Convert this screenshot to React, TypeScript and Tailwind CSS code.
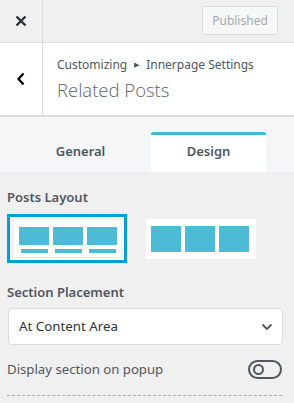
import React from "react";

export default function App() {
  const font = { fontFamily: '"Noto Sans", "Open Sans", sans-serif' };
  return (
    <div className="w-[294px] h-[403px] bg-[#f0f0f1] overflow-hidden text-[#50575e]" style={font}>
      {/* top bar */}
      <div className="h-[43px] flex border-b border-[#dcdcde] bg-[#f0f0f1]">
        <div className="w-[43px] border-r border-[#dcdcde] flex items-center justify-center">
          <svg width="12" height="12" viewBox="0 0 12 12">
            <path d="M1.5 1.5 L10.5 10.5 M10.5 1.5 L1.5 10.5" stroke="#2c3338" strokeWidth="2.4" strokeLinecap="butt" />
          </svg>
        </div>
        <div className="flex-1 flex justify-end items-start pt-[6px] pr-[16px]">
          <div className="w-[76px] h-[29px] rounded-[3px] border border-[#dcdcde] bg-[#f6f7f7] text-[#a7aaad] text-[12px] flex items-center justify-center">
            Published
          </div>
        </div>
      </div>
      {/* header */}
      <div className="h-[74px] flex bg-white border-b-2 border-[#dcdcde]">
        <div className="w-[43px] border-r border-[#dcdcde] flex items-center justify-center">
          <svg width="10" height="14" viewBox="0 0 10 14">
            <path d="M7.5 1.5 L2.5 7 L7.5 12.5" stroke="#000" strokeWidth="2.2" fill="none" />
          </svg>
        </div>
        <div className="flex-1 pl-[14px] pt-[13px]">
          <div className="text-[12px] leading-[18px] text-[#50575e] flex items-center">
            Customizing
            <span className="text-[7px] mx-[7px] text-[#50575e]">▶</span>
            Innerpage Settings
          </div>
          <div
            className="text-[18.5px] leading-[26px] font-light text-[#5f666d] mt-[3px]"
            style={{ fontFamily: '"Open Sans", "Noto Sans", sans-serif' }}
          >
            Related Posts
          </div>
        </div>
      </div>
      {/* tabs */}
      <div className="h-[55px] bg-[#f5f6f8] flex items-end pt-[15px]">
        <div className="w-[151px] h-[40px] flex items-center justify-center text-[13px] font-semibold text-[#50575e] pl-[10px]">
          General
        </div>
        <div className="w-[115px] h-[40px] bg-white rounded-t-[2px] border-t-[3px] border-[#46b7d3] flex items-center justify-center text-[13px] font-semibold text-[#50575e] pb-[3px]">
          Design
        </div>
      </div>
      {/* content */}
      <div className="bg-[#f0f0f0] px-[7px]">
        <div className="pt-[15px] text-[13px] leading-[20px] font-semibold text-[#50575e]">Posts Layout</div>
        <div className="flex items-center mt-[7px] gap-[19px]">
          <div className="w-[120px] h-[49px] border-[3px] border-[#00a0d2] bg-white p-[2px]">
            <div className="w-full h-full bg-white border border-[#eeeeee] pt-[7px] pl-[6px] flex gap-[4px]">
              {[0, 1, 2].map((i) => (
                <div key={i} className="flex flex-col items-center w-[30px]">
                  <div className="w-[30px] h-[18px] bg-[#4dbbd5]" />
                  <div className="w-[27px] h-[4px] bg-[#4dbbd5] mt-[4px]" />
                </div>
              ))}
            </div>
          </div>
          <div className="w-[110px] h-[40px] bg-white pt-[7px] pl-[5px] flex gap-[4px]">
            {[0, 1, 2].map((i) => (
              <div key={i} className="w-[30px] h-[26px] bg-[#4dbbd5]" />
            ))}
          </div>
        </div>
        <div className="mt-[19px] text-[13px] leading-[20px] font-semibold text-[#50575e]">Section Placement</div>
        <div className="mt-[6px] ml-[1px] w-[275px] h-[37px] bg-white border border-[#dcdcde] rounded-[4px] flex items-center justify-between pl-[10px] pr-[9px]">
          <span className="text-[13.3px] text-[#2c3338]">At Content Area</span>
          <svg width="12" height="8" viewBox="0 0 12 8">
            <path d="M1.5 1.5 L6 6 L10.5 1.5" stroke="#50575e" strokeWidth="1.8" fill="none" />
          </svg>
        </div>
        <div className="mt-[15px] flex items-center justify-between pr-[5px]">
          <span className="text-[13.2px] text-[#50575e]">Display section on popup</span>
          <div className="w-[34px] h-[19px] rounded-full border-2 border-[#50575e] flex items-center pl-[3px]">
            <div className="w-[11px] h-[11px] rounded-full border-2 border-[#50575e]" />
          </div>
        </div>
        <div className="mt-[15px] mr-[5px] border-t border-dashed border-[#a7aaad]" />
      </div>
    </div>
  );
}
